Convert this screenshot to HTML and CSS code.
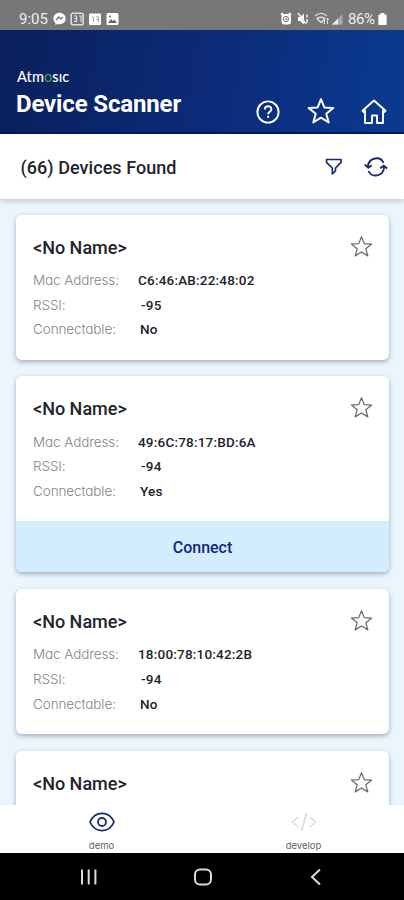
FILE: index.html
```html
<!DOCTYPE html>
<html lang="en">
<head>
<meta charset="utf-8">
<title>Device Scanner</title>
<link rel="stylesheet" href="styles.css">
</head>
<body>
<svg class="defs" width="0" height="0"><symbol id="star" viewBox="0 0 24 24"><path d="M12 1.800 14.900 9 22.600 9.400 16.500 14.300 18.600 21.800 12 17.700 5.400 21.800 7.500 14.300 1.400 9.400 9.100 9Z" fill="none" stroke="currentColor" stroke-linejoin="round"/></symbol></svg>
<div class="phone">
  <div class="status">
    <span class="time">9:05</span>
    <svg class="notices" width="68" height="14" viewBox="0 0 68 14">
      <path d="M6.500.8C3 .8.400 3.300.400 6.600c0 1.800.700 3.300 2 4.300v2l2-1c4.500 1.200 8.300-1.400 8.300-5.300C12.700 3.300 10 .8 6.500.8Z" fill="#fff"/>
      <path d="m3 8 2.700-3 2 1.800L10.200 5" fill="none" stroke="#777" stroke-width="1.300"/>
      <rect x="18.200" y="1.200" width="12" height="11.600" rx="2" fill="none" stroke="#ddd" stroke-width="1.600"/>
      <path d="M21 4h2.500v5.500H21M21.500 6.700h2M26 4h2v6" fill="none" stroke="#ddd" stroke-width="1.200"/>
      <rect x="36" y="1.500" width="12" height="11.500" rx="1" fill="#fff"/>
      <path d="M39 5h1.500v5M43 5h2.500v5M43 7.500h2" fill="none" stroke="#aaa"/>
      <rect x="53.500" y="1" width="12" height="12" rx="1.500" fill="#fff"/>
      <path d="m55 11 3-4 2 2 1.500-1.500L64 11Z" fill="#666"/><circle cx="57" cy="4.500" r="1" fill="#666"/>
    </svg>
    <svg class="signals" width="64" height="14" viewBox="0 0 64 14">
      <path d="m1 3 2-2M11 3 9 1" stroke="#fff" stroke-width="1.800"/><rect x="1.500" y="2" width="9.500" height="10.500" rx="3" fill="#fff"/><circle cx="6" cy="7" r="2.600" fill="none" stroke="#777"/><path d="M6 5.500v2h1.500" fill="none" stroke="#777"/>
      <path d="M18 5h2l4-3.500v11L20 9h-2Z" fill="#fff"/><path d="m18 1 8 11M27 2.500v3M27 7v4" stroke="#eee" stroke-width="1.500"/>
      <path d="M35 4c4-3.500 8-3.500 12 0M37 6.500c3-2 5-2 8 0l-4 4Z" fill="none" stroke="#ddd" stroke-width="1.400"/><path d="M44.500 6v6m-1.500-1.500 1.500 1.500M47.500 12V6m0 0 1.500 2" fill="none" stroke="#ddd"/>
      <path d="M52 12.500 62.500 2v10.500Z" fill="#aaa"/><path d="M52 12.500 58 6.500v6Z" fill="#eee"/>
    </svg>
    <span class="percent">86%</span>
    <svg class="battery" width="9" height="12" viewBox="0 0 9 13"><path d="M2.500 0h4v1.500H8q1 0 1 1V12q0 1-1 1H1q-1 0-1-1V2.500q0-1 1-1h1.500Z" fill="#fff"/></svg>
  </div>
  <header>
    <div class="brand"><div class="logo">Atm<b>o</b>sıc</div><h1>Device Scanner</h1></div>
    <svg class="help" width="24" height="24" viewBox="0 0 24 24" fill="none" stroke="#fff" stroke-width="1.900"><circle cx="12" cy="12" r="10.600"/><path d="M8.800 9.500c0-4.300 6.600-4.300 6.600-.3 0 2.600-3.300 2.500-3.300 5M12.100 15.700v2"/></svg>
    <svg class="star-lg" width="28" height="28"><use href="#star"/></svg>
    <svg class="home" width="26" height="26" viewBox="0 0 26 26" fill="none" stroke="#fff" stroke-width="1.900" stroke-linejoin="round"><path d="M4 11.500 2.500 13 1.500 11.800 13 1.500l11.500 10.300-1 1.200L22 11.500V24h-6v-7.500h-5V24H4Z"/></svg>
  </header>
  <div class="found"><span class="count">(66) Devices Found</span>
    <svg class="filter" width="18" height="18" viewBox="0 0 18 18" fill="none" stroke="#1c2a70" stroke-width="1.700" stroke-linejoin="round"><path d="M1.500 1.500h14.500v2.800L10.500 10v2.800L7.300 15.800V10L1.500 4.300Z"/></svg>
    <svg class="refresh" width="24" height="20" viewBox="0 0 24 20" fill="none" stroke="#1c2a70" stroke-width="1.900"><path d="M4 11V9C5 .5 16.500-1.500 19.500 6M20 9v2C19 19.500 7.500 21 4.500 14"/><path d="M.800 7.500 4.300 10.800l3.500-2.500M16.200 11.300 19.700 8.700l3.500 2.900"/></svg>
  </div>
  <main>
    <article class="card"><div class="head"><h2>&lt;No Name&gt;</h2><svg class="star"><use href="#star"/></svg></div>
      <dl><dt class="mac">Mac Address:</dt><dd>C6:46:AB:22:48:02</dd><dt>RSSI:</dt><dd class="num">-95</dd><dt class="conn">Connectable:</dt><dd class="answer">No</dd></dl></article>
    <article class="card"><div class="head"><h2>&lt;No Name&gt;</h2><svg class="star"><use href="#star"/></svg></div>
      <dl><dt class="mac">Mac Address:</dt><dd>49:6C:78:17:BD:6A</dd><dt>RSSI:</dt><dd class="num">-94</dd><dt class="conn">Connectable:</dt><dd class="answer">Yes</dd></dl><button>Connect</button></article>
    <article class="card"><div class="head"><h2>&lt;No Name&gt;</h2><svg class="star"><use href="#star"/></svg></div>
      <dl><dt class="mac">Mac Address:</dt><dd>18:00:78:10:42:2B</dd><dt>RSSI:</dt><dd class="num">-94</dd><dt class="conn">Connectable:</dt><dd class="answer">No</dd></dl></article>
    <article class="card"><div class="head"><h2>&lt;No Name&gt;</h2><svg class="star"><use href="#star"/></svg></div></article>
  </main>
  <nav>
    <div class="tab"><svg width="26" height="20" viewBox="0 0 26 20" fill="none" stroke="#1c2a70" stroke-width="1.800"><path d="M1 10C6-1.500 20-1.500 25 10 20 21.500 6 21.500 1 10Z"/><circle cx="13" cy="10" r="4"/></svg><span>demo</span></div>
    <div class="tab"><svg width="26" height="20" viewBox="0 0 26 20" fill="none" stroke="#d8dddd" stroke-width="1.600"><path d="M7 5 1.500 10 7 15M19 5l5.500 5L19 15M15.500 1l-5 18"/></svg><span>develop</span></div>
  </nav>
  <div class="system">
    <svg width="18" height="18" viewBox="0 0 18 18" stroke="#ddd" stroke-width="2"><path d="M2 1.500v15M8.700 1.500v15M15.400 1.500v15"/></svg>
    <svg width="18" height="18" viewBox="0 0 18 18" fill="none" stroke="#ddd" stroke-width="2"><rect x="1" y="1.500" width="16" height="15" rx="5"/></svg>
    <svg width="18" height="18" viewBox="0 0 18 18" fill="none" stroke="#ddd" stroke-width="2"><path d="m13 1.500-8 7.500 8 7.500"/></svg>
  </div>
</div>
</body>
</html>
```
FILE: styles.css
```css
* { box-sizing: border-box; }
body { margin: 0; font-family: Roboto, sans-serif; color: #22232b; }
h1, h2, dl, dd { margin: 0; }
svg { display: block; flex: none; }
.defs { position: absolute; }
.phone { width: 404px; height: 900px; display: flex; flex-direction: column; overflow: hidden; }
.status { height: 30px; flex: none; background: #777; color: #eee; display: flex; align-items: center; padding: 7px 0 0 19px; font-size: 15px; }
.time { width: 34px; letter-spacing: 0; }
.signals { margin-left: 159px; }
.percent { margin-left: 4px; width: 30px; letter-spacing: -.4px; }
header { height: 104px; flex: none; background: linear-gradient(100deg, #0a205c, #0c2a77 50%, #0a3b91); border-bottom: 2px solid #07146d; color: #fff; display: flex; align-items: flex-start; padding-left: 16px; }
.brand { width: 240px; padding-top: 39px; }
.logo { font: 500 14.500px/15px Lato, sans-serif; letter-spacing: .1px; padding-left: 1px; }
.logo b { font-weight: 400; color: #4aa052; }
h1 { font-size: 24px; line-height: 28px; font-weight: 700; letter-spacing: -.15px; margin-top: 6px; white-space: nowrap; }
.help { margin-top: 70px; }
.star-lg { margin: 67px 0 0 27px; stroke-width: 1.700; }
.home { margin: 69px 0 0 26px; }
.found { height: 65px; flex: none; background: #fff; display: flex; align-items: center; padding: 1px 0 0 20px; position: relative; box-shadow: 0 2px 6px #0003; }
.count { width: 305px; font-size: 18px; font-weight: 500; letter-spacing: .05px; padding-left: .5px; }
.refresh { margin-left: 21px; }
main { flex: 1; min-height: 0; overflow: hidden; background: #eaf5fd; padding: 15.500px 15px 0 16px; display: flex; flex-direction: column; gap: 16.700px; }
.card { flex: none; min-height: 145px; background: #fff; border-radius: 6px; box-shadow: 0 2px 5px #0b204055; overflow: hidden; }
.head { display: flex; justify-content: space-between; padding: 20px 16px 0 17px; }
h2 { font-size: 18px; line-height: 26px; font-weight: 500; }
.star { width: 23px; height: 23px; stroke-width: 1.300; color: #666970; }
dl { display: grid; grid-template-columns: 105px 1fr; grid-auto-rows: 24.700px; align-items: center; padding: 7px 17px 18px; font-size: 13.500px; letter-spacing: .2px; }
dt { font-family: Inter, sans-serif; font-feature-settings: "cv11"; font-weight: 300; font-size: 13.500px; letter-spacing: -.1px; color: #80858b; }
dd { font-weight: 500; }
.num { padding-left: 3px; }
.answer { padding-left: 2px; }
button { display: block; width: 100%; height: 51px; border: 0; padding: 2px 0 0; background: #d1edfe; color: #14277b; font: 500 16px Roboto, sans-serif; }
nav { height: 48px; flex: none; background: #fff; display: grid; grid-template-columns: 1fr 1fr; position: relative; }
.tab { display: flex; flex-direction: column; align-items: center; padding: 7px 0 0 1px; font: 9.500px/14px Inter, sans-serif; color: #59656b; }
.tab span { margin-top: 7px; }
.system { height: 47px; flex: none; background: #000; display: flex; align-items: center; justify-content: space-between; padding: 0 79px 0 80px; }
```
